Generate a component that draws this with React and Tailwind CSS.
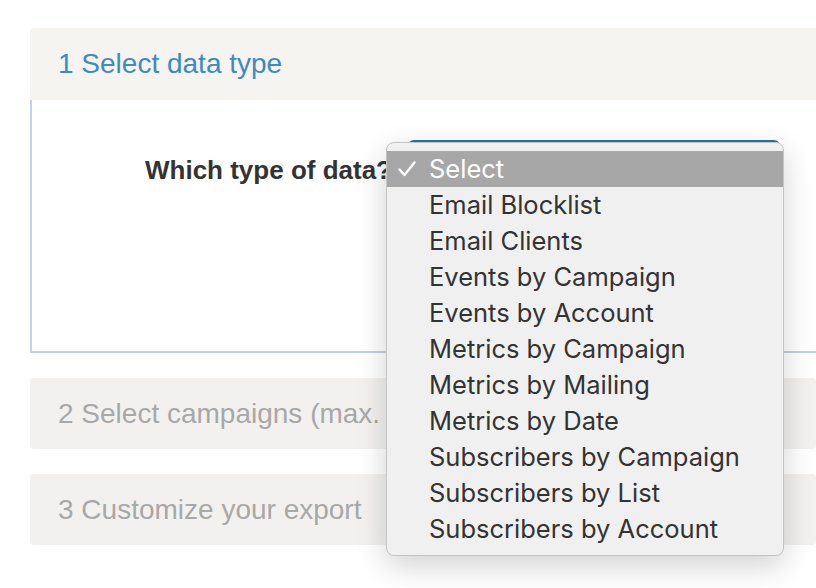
import React from "react";

const options = [
  "Email Blocklist",
  "Email Clients",
  "Events by Campaign",
  "Events by Account",
  "Metrics by Campaign",
  "Metrics by Mailing",
  "Metrics by Date",
  "Subscribers by Campaign",
  "Subscribers by List",
  "Subscribers by Account",
];

const Step = ({ label }) => (
  <div className="h-[71px] rounded-[4px] bg-[#f2f1f0] pl-[28px] flex items-center text-[28px] text-[#a8a8a8]">
    {label}
  </div>
);

export default function App() {
  return (
    <div
      className="w-[816px] h-[588px] overflow-hidden bg-white pl-[30px] pt-[28px]"
      style={{ fontFamily: '"Liberation Sans", Arial, sans-serif' }}
    >
      <div className="flex flex-col">
        {/* step 1 */}
        <div className="h-[72px] rounded-tl-[4px] bg-[#f5f4f1] pl-[28px] flex items-center text-[28px] text-[#3e8ac1]">
          1 Select data type
        </div>
        <div className="relative h-[253px] border-l-2 border-b-2 border-[#c1d1de] bg-white">
          <div className="absolute left-[113px] top-[51px] text-[26px] font-bold text-[#333333] whitespace-nowrap">
            Which type of data?
          </div>
          {/* select box behind the menu */}
          <div className="absolute left-[376px] top-[40px] w-[372px] h-[40px] rounded-t-[6px] border-t-2 border-x border-[#1f77a8]" />
          {/* open menu */}
          <div
            className="absolute left-[354px] top-[42px] w-[398px] h-[414px] rounded-[8px] border border-[#c4c4c4] bg-[#f0f0f0] py-[8px] shadow-[0_10px_30px_rgba(0,0,0,0.18)] z-10"
            style={{ fontFamily: 'Inter, "Liberation Sans", sans-serif' }}
          >
            <div className="h-[36px] bg-[#a7a7a7] flex items-center text-white text-[25.5px]">
              <span className="w-[42px] pl-[11px] flex items-center">
                <svg width="18" height="16" viewBox="0 0 18 16" fill="none">
                  <path d="M1.5 8.5 L6.5 14 L16.5 1.5" stroke="white" strokeWidth="2.4" strokeLinecap="round" strokeLinejoin="round" />
                </svg>
              </span>
              <span>Select</span>
            </div>
            {options.map((o) => (
              <div key={o} className="h-[36px] flex items-center pl-[42px] text-[25.5px] text-[#333333]">
                {o}
              </div>
            ))}
          </div>
        </div>
        <div className="mt-[25px] flex flex-col gap-[25px]">
          <Step label="2 Select campaigns (max. 10)" />
          <Step label="3 Customize your export" />
        </div>
      </div>
    </div>
  );
}
